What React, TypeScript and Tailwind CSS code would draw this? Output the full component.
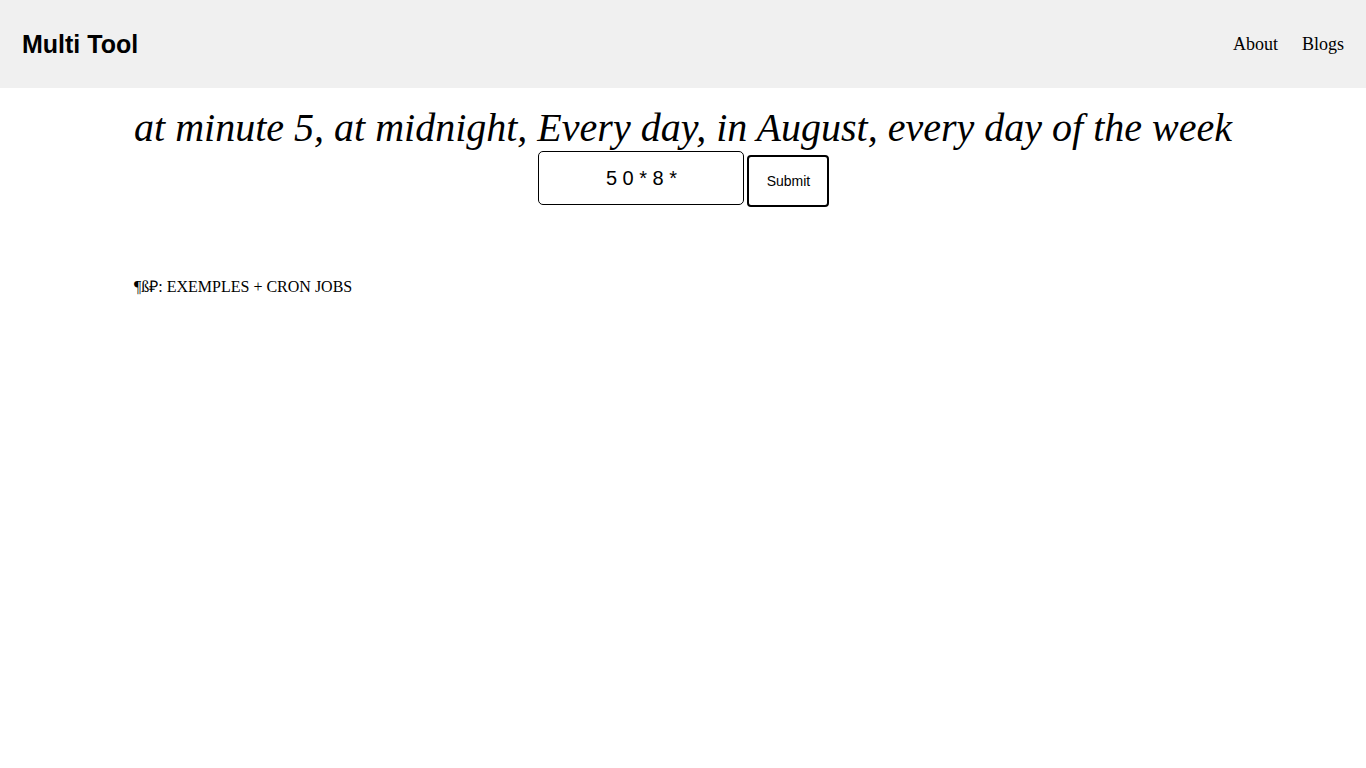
export default function App() {
  return (
    <div className="min-h-screen bg-white text-black">
      {/* top bar */}
      <header className="h-[88px] bg-[#f0f0f0] flex items-center justify-between pl-[22px] pr-[22px]">
        <h1 className="text-[25px] font-bold font-['Liberation_Sans',sans-serif] pt-[2px]">Multi Tool</h1>
        <nav className="flex gap-[24px] font-['Liberation_Serif',serif] text-[18px]">
          <a href="#">About</a>
          <a href="#">Blogs</a>
        </nav>
      </header>

      <main className="w-fit mx-auto">
        <h2 className="text-[40px] leading-[46px] italic text-center font-['Liberation_Serif',serif] mt-[17px]">
          at minute 5, at midnight, Every day, in August, every day of the week
        </h2>
        <form className="flex justify-center items-start gap-[3px] pl-[2px]" onSubmit={(e) => e.preventDefault()}>
          <input
            defaultValue="5 0 * 8 *"
            className="w-[206px] h-[54px] border border-black rounded-[5px] text-center text-[20px] font-['Liberation_Sans',sans-serif] outline-none"
          />
          <button className="w-[82px] h-[52px] mt-[4px] border-2 border-black rounded-[4px] text-[14px] font-['Liberation_Sans',sans-serif]">
            Submit
          </button>
        </form>
        <p className="mt-[68px] text-[16px] font-['Liberation_Serif',serif]">¶ß₽: EXEMPLES + CRON JOBS</p>
      </main>
    </div>
  )
}
